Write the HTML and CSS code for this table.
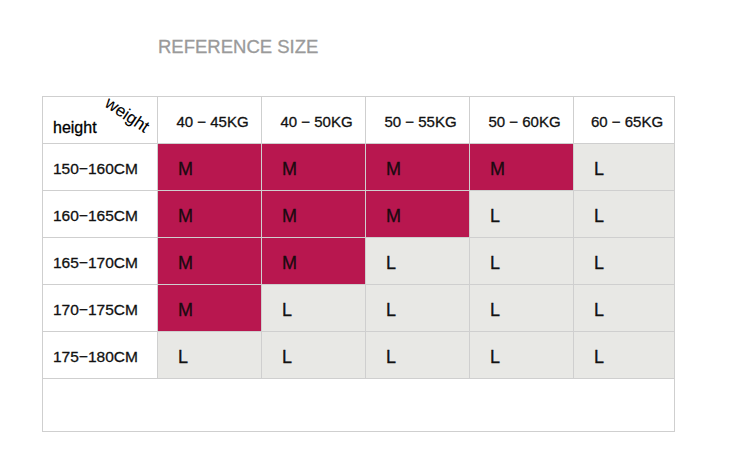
FILE: index.html
```html
<!DOCTYPE html>
<html>
<head>
<meta charset="utf-8">
<link rel="stylesheet" href="styles.css">
</head>
<body>
<h1 class="title">REFERENCE SIZE</h1>
<div class="chart">
  <div class="cell corner"><span class="corner-h">height</span><span class="corner-w">weight</span></div>
  <div class="cell head">40 − 45KG</div>
  <div class="cell head">40 − 50KG</div>
  <div class="cell head">50 − 55KG</div>
  <div class="cell head">50 − 60KG</div>
  <div class="cell head">60 − 65KG</div>

  <div class="cell label">150−160CM</div>
  <div class="cell m">M</div><div class="cell m">M</div><div class="cell m">M</div><div class="cell m">M</div><div class="cell l">L</div>

  <div class="cell label">160−165CM</div>
  <div class="cell m">M</div><div class="cell m">M</div><div class="cell m">M</div><div class="cell l">L</div><div class="cell l">L</div>

  <div class="cell label">165−170CM</div>
  <div class="cell m">M</div><div class="cell m">M</div><div class="cell l">L</div><div class="cell l">L</div><div class="cell l">L</div>

  <div class="cell label">170−175CM</div>
  <div class="cell m">M</div><div class="cell l">L</div><div class="cell l">L</div><div class="cell l">L</div><div class="cell l">L</div>

  <div class="cell label">175−180CM</div>
  <div class="cell l">L</div><div class="cell l">L</div><div class="cell l">L</div><div class="cell l">L</div><div class="cell l">L</div>

  <div class="cell foot"></div>
</div>
</body>
</html>
```
FILE: styles.css
```css
html, body {
  margin: 0;
  padding: 0;
  background: #ffffff;
}
body {
  font-family: "Liberation Sans", Arial, sans-serif;
  color: #111;
  -webkit-text-stroke: 0.3px currentColor;
}
.title {
  margin: 37px 0 0 158px;
  font-size: 18.5px;
  line-height: 20px;
  font-weight: normal;
  color: #9a9a9a;
}
.chart {
  margin: 39px 0 0 42px;
  width: 633px;
  box-sizing: border-box;
  display: grid;
  grid-template-columns: 114px 103px 103px 103px 103px 100px;
  grid-template-rows: 46px 46px 46px 46px 46px 46px 52px;
  gap: 1px;
  border: 1px solid #cfcfcf;
  background: #cfcfcf;
}
.cell {
  display: flex;
  align-items: center;
  box-sizing: border-box;
  padding-top: 3px;
  background: #fff;
}
.corner {
  position: relative;
  align-items: flex-end;
  padding: 0 0 6px 10px;
}
.corner-h {
  font-size: 16px;
  line-height: 18px;
  color: #000;
}
.corner-w {
  position: absolute;
  left: 68px;
  top: -2px;
  font-size: 17px;
  line-height: 16px;
  color: #000;
  -webkit-text-stroke: 0.1px currentColor;
  transform: rotate(34deg);
  transform-origin: 0 0;
}
.head {
  justify-content: center;
  font-size: 15px;
  padding-left: 6px;
}
.label {
  font-size: 15.5px;
  padding-left: 10px;
}
.m, .l {
  font-size: 18px;
  padding-left: 20px;
  padding-top: 5px;
}
.m {
  background: #b8174f;
  color: #1a0a10;
}
.l {
  background: #e8e8e5;
  color: #111;
}
.foot {
  grid-column: 1 / -1;
}
```
